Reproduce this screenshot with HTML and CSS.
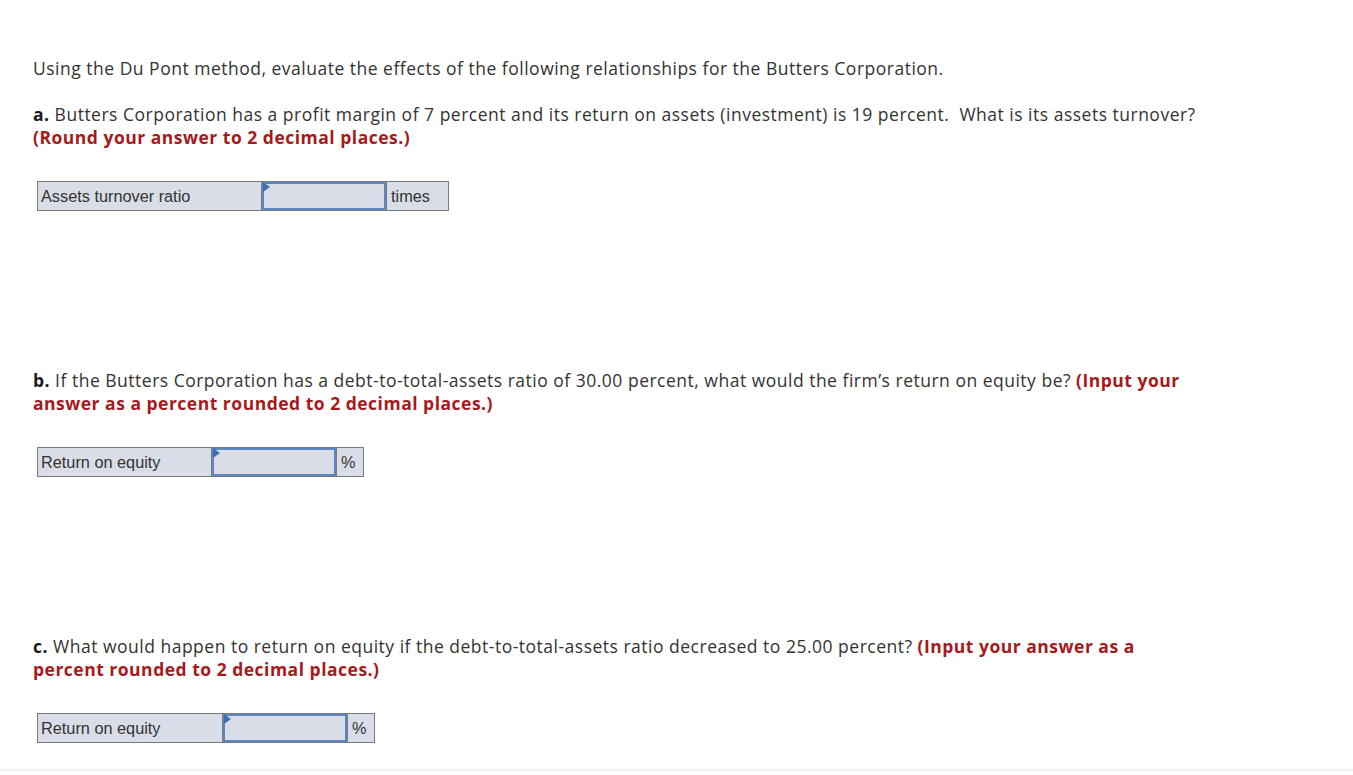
FILE: index.html
```html
<!DOCTYPE html>
<html>
<head>
<meta charset="utf-8">
<link rel="stylesheet" href="styles.css">
</head>
<body>
<div class="page">
  <p class="intro">Using the Du Pont method, evaluate the effects of the following relationships for the Butters Corporation.</p>

  <section class="part">
    <p class="q"><b class="lbl">a.</b> Butters Corporation has a profit margin of 7 percent and its return on assets (investment) is 19 percent.&nbsp; What is its assets turnover?<br><span class="hint">(Round your answer to 2 decimal places.)</span></p>
    <table class="ans">
      <tr>
        <td class="name w-a">Assets turnover ratio</td>
        <td class="inp"><div class="box"><span class="flag"></span></div></td>
        <td class="unit w-times">times</td>
      </tr>
    </table>
  </section>

  <section class="part">
    <p class="q"><b class="lbl">b.</b> If the Butters Corporation has a debt-to-total-assets ratio of 30.00 percent, what would the firm’s return on equity be? <span class="hint">(Input your<br>answer as a percent rounded to 2 decimal places.)</span></p>
    <table class="ans">
      <tr>
        <td class="name w-b">Return on equity</td>
        <td class="inp"><div class="box"><span class="flag"></span></div></td>
        <td class="unit w-pct">%</td>
      </tr>
    </table>
  </section>

  <section class="part">
    <p class="q"><b class="lbl">c.</b> What would happen to return on equity if the debt-to-total-assets ratio decreased to 25.00 percent? <span class="hint">(Input your answer as a<br>percent rounded to 2 decimal places.)</span></p>
    <table class="ans">
      <tr>
        <td class="name w-c">Return on equity</td>
        <td class="inp"><div class="box"><span class="flag"></span></div></td>
        <td class="unit w-pct">%</td>
      </tr>
    </table>
  </section>
</div>
<div class="rule"></div>
</body>
</html>
```

FILE: styles.css
```css
html, body {
  margin: 0;
  padding: 0;
  background: #ffffff;
}

.page {
  padding: 57px 0 0 33px;
  width: 1260px;
  font-family: "Open Sans", "Lato", sans-serif;
  font-size: 17.5px;
  letter-spacing: 0.5px;
  line-height: 23px;
  color: #333333;
  white-space: nowrap;
}

.intro {
  margin: 0 0 23px 0;
}

.part {
  margin: 0;
}

.part + .part {
  margin-top: 158px;
}

.q {
  margin: 0 0 32px 0;
}

.lbl {
  font-weight: 700;
  color: #1a1a1a;
}

.hint {
  font-weight: 700;
  color: #a6191c;
}

.ans {
  border-collapse: collapse;
  margin-left: 4px;
  font-family: "Liberation Sans", Arial, sans-serif;
  font-size: 16.3px;
  letter-spacing: 0;
  color: #333;
}

.ans td {
  border: 1px solid #7b7b7b;
  background: #d9dde7;
  height: 28px;
  padding: 0;
  vertical-align: middle;
}

.name {
  padding-left: 3px !important;
  box-sizing: border-box;
}

.w-a { width: 224px; }
.w-b { width: 174px; }
.w-c { width: 185px; }

.unit {
  padding: 0 4px !important;
}

.w-times {
  width: 53px;
}

.w-pct {
  width: 18px;
}

.inp {
  width: 124px;
}

.box {
  position: relative;
  height: 24px;
  margin: 0;
  border: 2px solid #5b86c1;
  background: #d9dde7;
}

.flag {
  position: absolute;
  top: -1px;
  left: -1px;
  width: 0;
  height: 0;
  border-top: 5px solid transparent;
  border-bottom: 5px solid transparent;
  border-left: 7px solid #3d6fb6;
  transform: translateY(-1px);
}

.rule {
  position: absolute;
  left: 0;
  top: 769px;
  width: 1353px;
  height: 2px;
  background: #f0f0f0;
}
```
